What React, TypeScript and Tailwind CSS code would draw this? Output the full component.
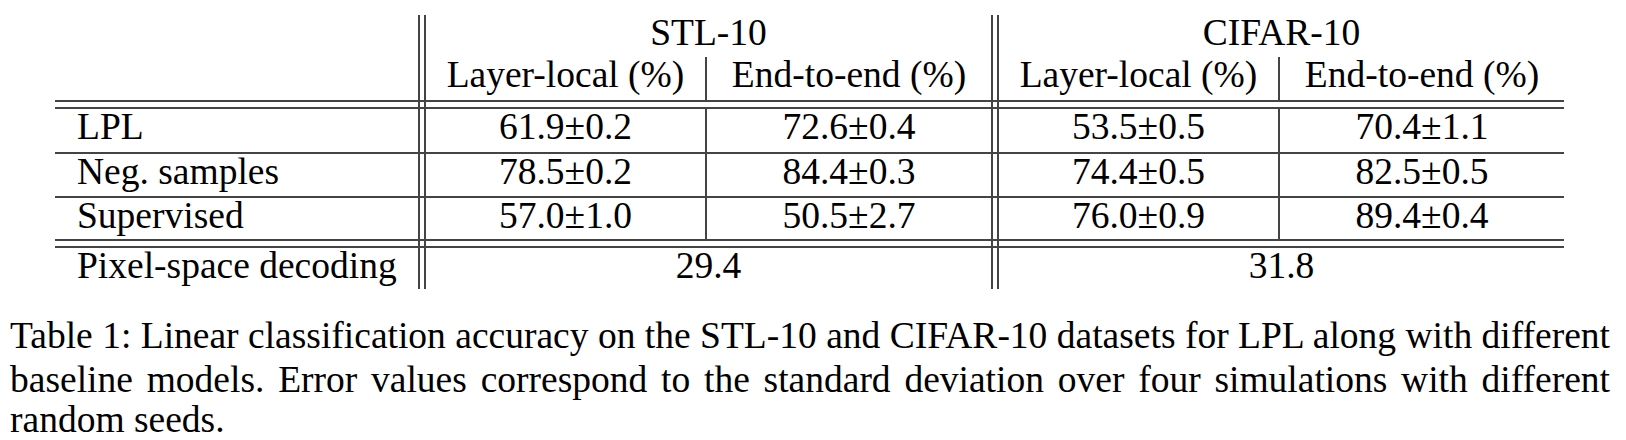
import React from "react";

type Cell = string;

const rule = "bg-[#444]";

function Dbl() {
  return <div className="w-[8px] shrink-0 self-stretch border-x-2 border-[#444]" />;
}

function HRule() {
  return <div className={`h-[2px] w-full ${rule}`} />;
}

// gap between the two lines of a double rule, only the double verticals pass through
function Gap() {
  return (
    <div className="flex h-[5px]">
      <div className="w-[363px] shrink-0" />
      <Dbl />
      <div className="w-[565px] shrink-0" />
      <Dbl />
      <div className="w-[565px] shrink-0" />
    </div>
  );
}

function DataRow({ label, cells, h }: { label: string; cells: Cell[]; h: string }) {
  return (
    <div className={`flex ${h}`}>
      <div className="w-[363px] shrink-0 pl-[22px]">{label}</div>
      <Dbl />
      <div className="w-[279px] shrink-0 text-center">{cells[0]}</div>
      <div className="w-[286px] shrink-0 border-l-2 border-[#444] text-center">{cells[1]}</div>
      <Dbl />
      <div className="w-[279px] shrink-0 text-center">{cells[2]}</div>
      <div className="w-[286px] shrink-0 border-l-2 border-[#444] text-center">{cells[3]}</div>
    </div>
  );
}

const rows = [
  { label: "LPL", cells: ["61.9±0.2", "72.6±0.4", "53.5±0.5", "70.4±1.1"], h: "h-[43px]" },
  { label: "Neg. samples", cells: ["78.5±0.2", "84.4±0.3", "74.4±0.5", "82.5±0.5"], h: "h-[42px]" },
  { label: "Supervised", cells: ["57.0±1.0", "50.5±2.7", "76.0±0.9", "89.4±0.4"], h: "h-[41px]" },
];

export default function App() {
  return (
    <div className="w-[1626px] h-[440px] overflow-hidden bg-white text-black font-['Liberation_Serif'] text-[37.5px] leading-[36px]">
      <div className="pt-[15px] pl-[55px]">
        <div className="w-[1509px]">
          {/* header: dataset names */}
          <div className="flex h-[42px]">
            <div className="w-[363px] shrink-0" />
            <Dbl />
            <div className="w-[565px] shrink-0 text-center">STL-10</div>
            <Dbl />
            <div className="w-[565px] shrink-0 text-center">CIFAR-10</div>
          </div>
          <DataRow
            label=""
            cells={["Layer-local (%)", "End-to-end (%)", "Layer-local (%)", "End-to-end (%)"]}
            h="h-[43px]"
          />
          <HRule />
          <Gap />
          <HRule />
          {rows.map((r, i) => (
            <React.Fragment key={r.label}>
              {i > 0 && <HRule />}
              <DataRow label={r.label} cells={r.cells} h={r.h} />
            </React.Fragment>
          ))}
          <HRule />
          <Gap />
          <HRule />
          <div className="flex h-[41px]">
            <div className="w-[363px] shrink-0 pl-[22px]">Pixel-space decoding</div>
            <Dbl />
            <div className="w-[565px] shrink-0 text-center">29.4</div>
            <Dbl />
            <div className="w-[565px] shrink-0 text-center">31.8</div>
          </div>
        </div>
      </div>

      <div className="ml-[10px] mt-[25px] w-[1600px] leading-[44px]">
        <div className="whitespace-nowrap text-justify [text-align-last:justify]">
          Table 1: Linear classification accuracy on the STL-10 and CIFAR-10 datasets for LPL along with different
        </div>
        <div className="whitespace-nowrap text-justify [text-align-last:justify]">
          baseline models. Error values correspond to the standard deviation over four simulations with different
        </div>
        <div className="leading-[36px]">random seeds.</div>
      </div>
    </div>
  );
}
